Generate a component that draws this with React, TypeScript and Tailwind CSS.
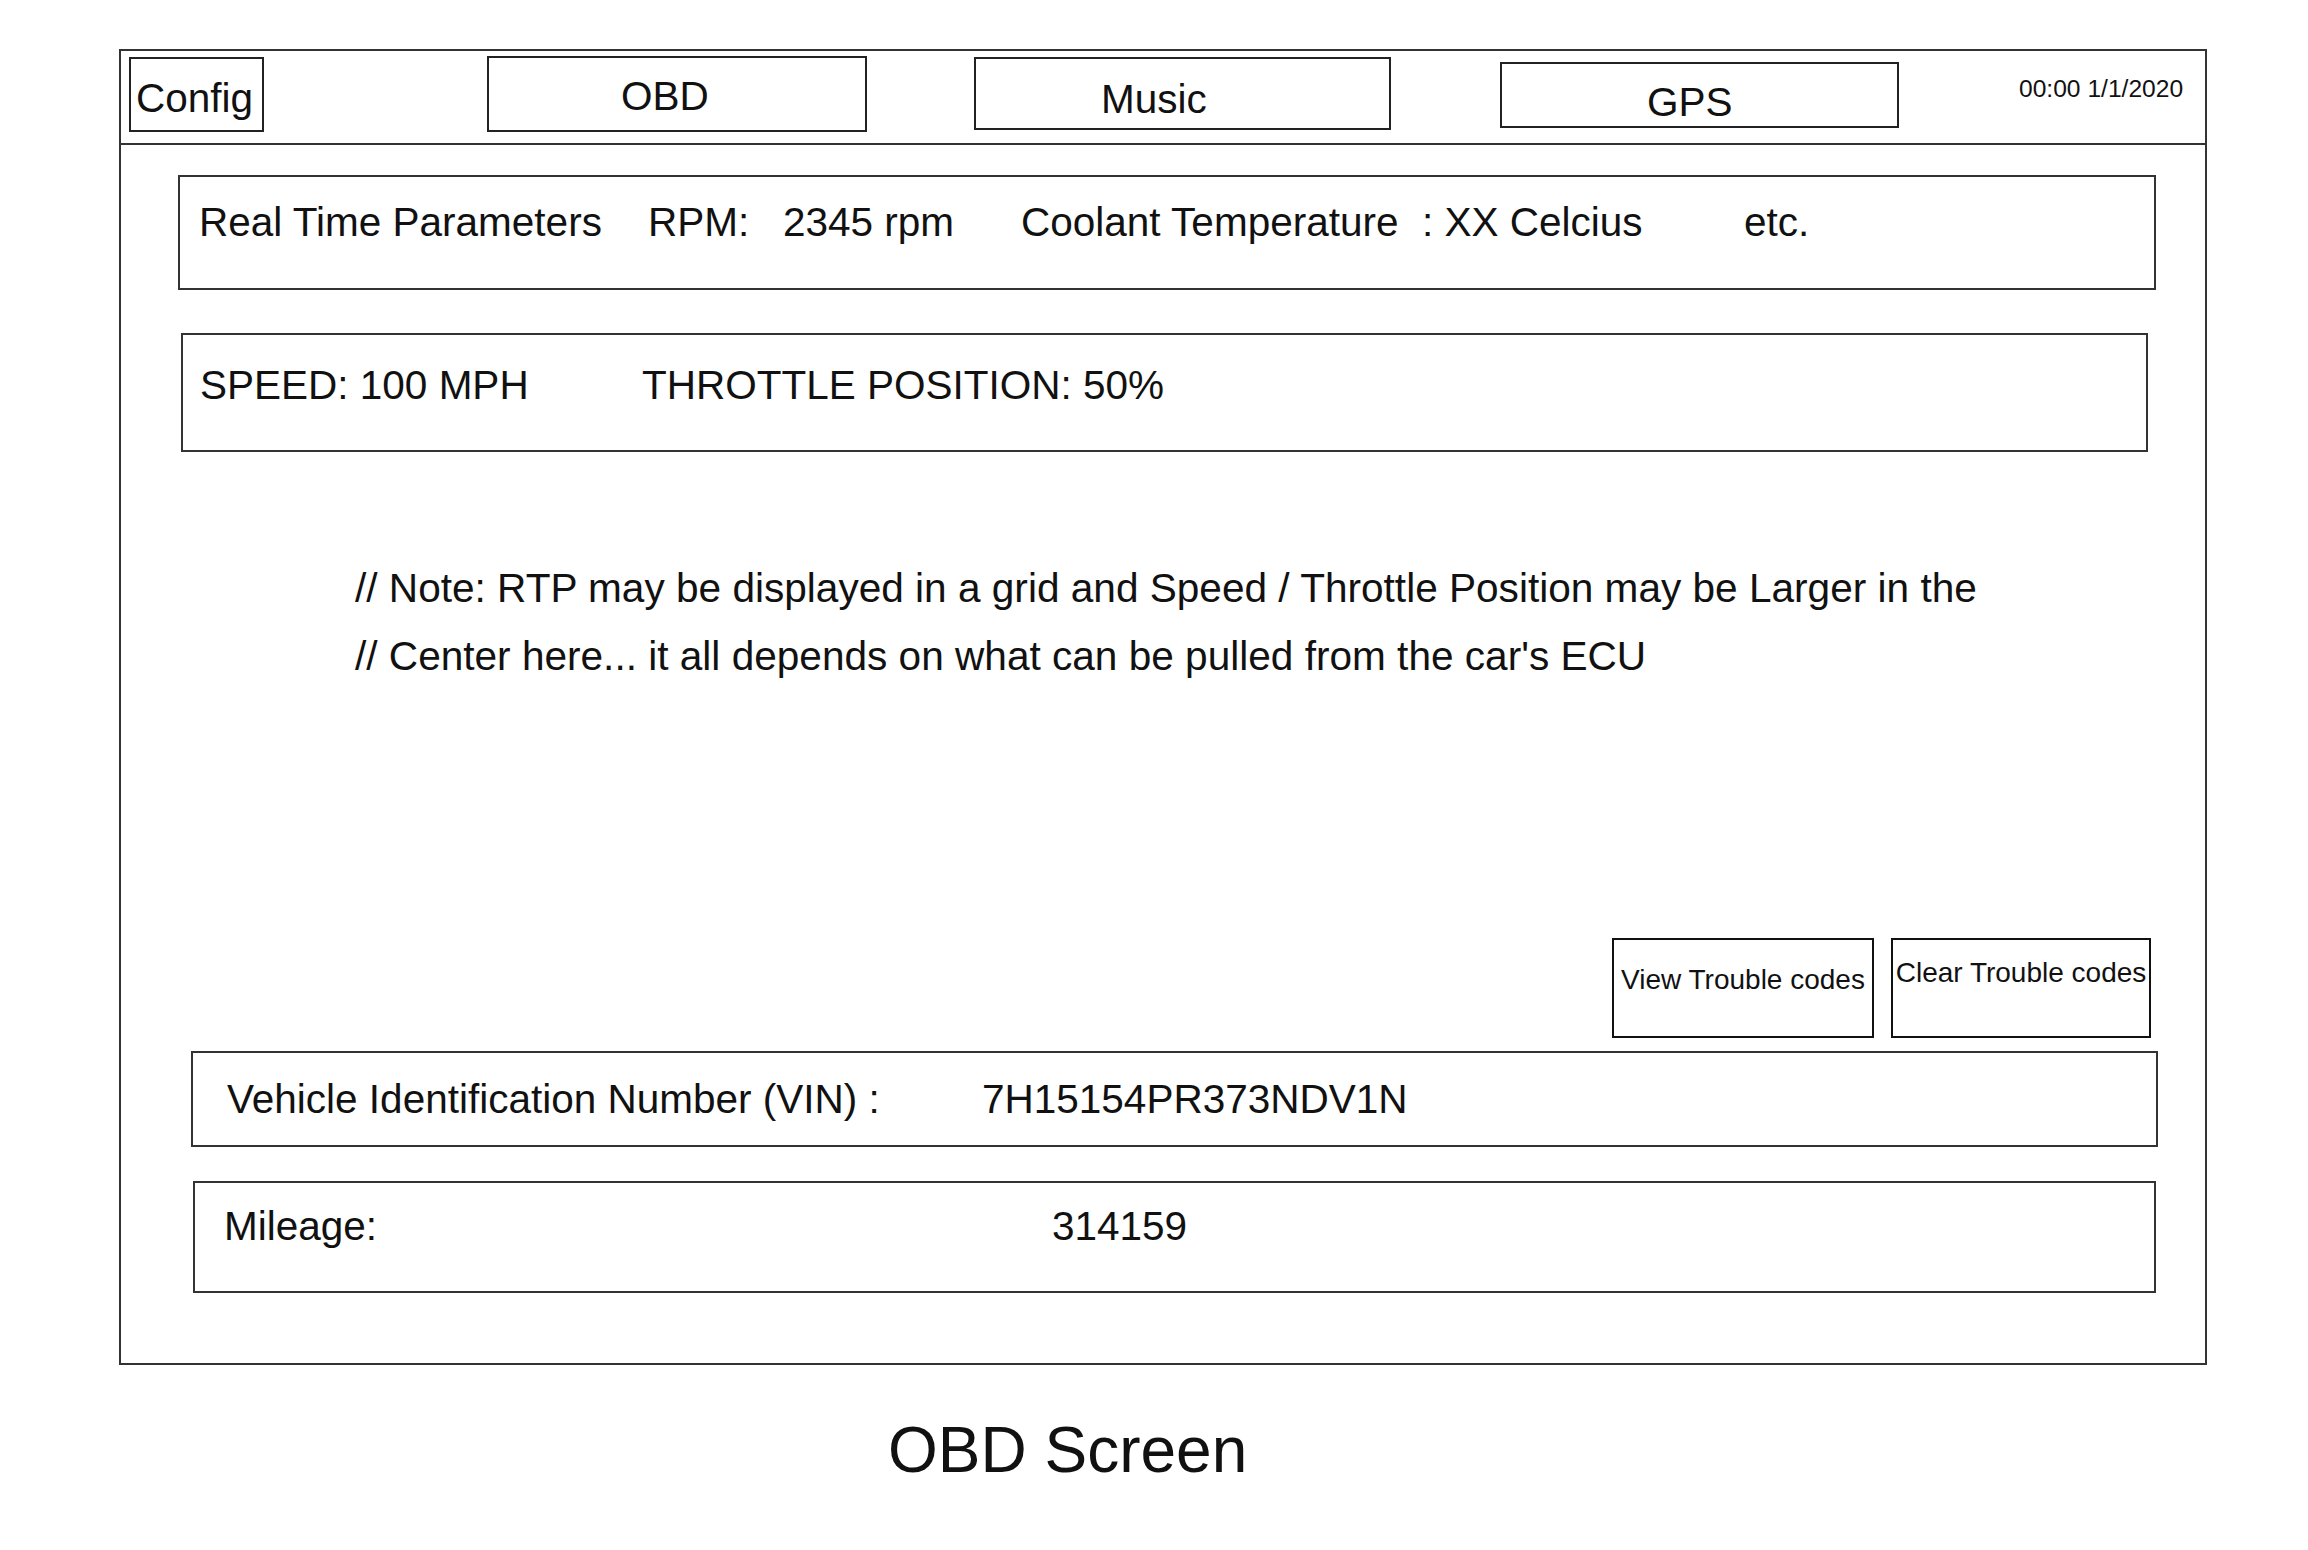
export default function App() {
  return (
    <div className="w-[2308px] h-[1550px] bg-white font-['Liberation_Sans',Arial,sans-serif] text-[#111]">
      <div className="pt-[49px] pl-[119px]">
        {/* Device frame */}
        <div className="w-[2088px] h-[1316px] border-2 border-[#333] flex flex-col">
          {/* Top bar */}
          <div className="h-[94px] border-b-2 border-[#333] flex items-start shrink-0">
            <div className="ml-[8px] mt-[6px] w-[135px] h-[75px] border-2 border-[#222] pl-[5px] pt-[19px] text-[40.5px] leading-none">
              Config
            </div>
            <div className="ml-[223px] mt-[5px] w-[380px] h-[76px] border-2 border-[#222] pl-[132px] pt-[18px] text-[40.5px] leading-none">
              OBD
            </div>
            <div className="ml-[107px] mt-[6px] w-[417px] h-[73px] border-2 border-[#222] pl-[125px] pt-[20px] text-[40.5px] leading-none">
              Music
            </div>
            <div className="ml-[109px] mt-[11px] w-[399px] h-[66px] border-2 border-[#222] pl-[145px] pt-[18px] text-[40.5px] leading-none">
              GPS
            </div>
            <div className="ml-[120px] mt-[26px] text-[24.6px] leading-none whitespace-nowrap">00:00 1/1/2020</div>
          </div>

          {/* Body */}
          <div className="flex flex-col items-start">
            <div className="ml-[57px] mt-[30px] w-[1978px] h-[115px] border-2 border-[#333] pl-[19px] pt-[25px] text-[40.5px] leading-none flex whitespace-nowrap">
              <span className="w-[449px]">Real Time Parameters</span>
              <span className="w-[135px]">RPM:</span>
              <span className="w-[238px]">2345 rpm</span>
              <span className="w-[401px]">Coolant Temperature</span>
              <span className="w-[322px]">: XX Celcius</span>
              <span>etc.</span>
            </div>

            <div className="ml-[60px] mt-[43px] w-[1967px] h-[119px] border-2 border-[#333] pl-[17px] pt-[30px] text-[40.5px] leading-none flex whitespace-nowrap">
              <span className="w-[442px]">SPEED: 100 MPH</span>
              <span>THROTTLE POSITION: 50%</span>
            </div>

            <div className="ml-[234px] mt-[102px] text-[40.6px] leading-[68px] whitespace-nowrap">
              <p>// Note: RTP may be displayed in a grid and Speed / Throttle Position may be Larger in the</p>
              <p>// Center here... it all depends on what can be pulled from the car's ECU</p>
            </div>

            <div className="ml-[1491px] mt-[248px] flex gap-[17px]">
              <button className="w-[262px] h-[100px] border-2 border-[#111] pt-[26px] text-[28px] leading-none text-center flex justify-center items-start whitespace-nowrap">
                View Trouble codes
              </button>
              <button className="w-[260px] h-[100px] border-2 border-[#111] pt-[19px] text-[28px] leading-none text-center flex justify-center items-start whitespace-nowrap">
                Clear Trouble codes
              </button>
            </div>

            <div className="ml-[70px] mt-[13px] w-[1967px] h-[96px] border-2 border-[#333] pl-[34px] pt-[26px] text-[40.5px] leading-none flex whitespace-nowrap">
              <span className="w-[755px]">Vehicle Identification Number (VIN) :</span>
              <span>7H15154PR373NDV1N</span>
            </div>

            <div className="ml-[72px] mt-[34px] w-[1963px] h-[112px] border-2 border-[#333] pl-[29px] pt-[23px] text-[40.5px] leading-none flex whitespace-nowrap">
              <span className="w-[828px]">Mileage:</span>
              <span>314159</span>
            </div>
          </div>
        </div>

        {/* Caption */}
        <div className="ml-[769px] mt-[53px] text-[64px] leading-none whitespace-nowrap">OBD Screen</div>
      </div>
    </div>
  );
}
